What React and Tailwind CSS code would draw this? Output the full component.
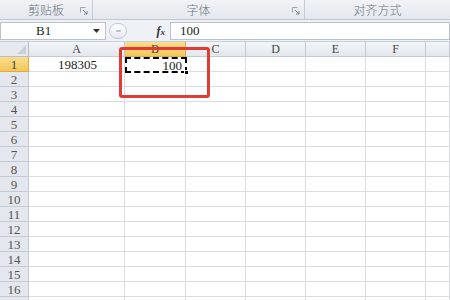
import { useState } from 'react'

const cols = ['A', 'B', 'C', 'D', 'E', 'F', '']
const rows = Array.from({ length: 17 }, (_, i) => i + 1)

const Launcher = () => (
  <svg width="8" height="8" viewBox="0 0 8 8" className="shrink-0">
    <path d="M0.5 0.5h5M0.5 0.5v5" stroke="#9aa4b2" strokeWidth="1" fill="none" />
    <path d="M3 3l4 4M7 4v3h-3" stroke="#7a8696" strokeWidth="1" fill="none" />
  </svg>
)

const RibbonGroup = ({ label, width, launcher }) => {
  return (
    <div className={`relative flex items-center justify-center h-full border-r border-[#c5ccd6] ${width}`}>
      <span className="text-[12px] font-light text-[#6b7280]">{label}</span>
      {launcher && (
        <div className="absolute right-[4px] top-[7px]">
          <Launcher />
        </div>
      )}
    </div>
  )
}

const FormulaBar = () => {
  return (
    <div className="flex h-[18px] items-stretch bg-[#eef1f5]">
      <div className="flex w-[106px] items-center bg-white border border-[#b9c1cc]">
        <span className="flex-1 pl-[35px] text-[13px] text-[#222] font-['Liberation_Serif',serif]">B1</span>
        <svg width="7" height="4" viewBox="0 0 7 4" className="mr-[5px]">
          <path d="M0 0h7L3.5 4z" fill="#333" />
        </svg>
      </div>
      <div className="flex w-[64px] items-center">
        <div className="ml-[3px] h-[16px] w-[18px] rounded-full border border-[#c3c9d2] bg-gradient-to-b from-white to-[#e4e8ee] flex items-center justify-center">
          <div className="h-[2px] w-[5px] bg-[#b8bec8] rounded" />
        </div>
        <span className="ml-auto mr-[5px] text-[12px] italic font-bold text-[#333] font-['Liberation_Serif',serif]">
          f<span className="text-[9px]">x</span>
        </span>
      </div>
      <div className="flex-1 flex items-center bg-white border border-[#b9c1cc]">
        <span className="pl-[9px] text-[13px] text-[#222] font-['Liberation_Serif',serif]">100</span>
      </div>
    </div>
  )
}

const Sheet = () => {
  const [active] = useState({ r: 1, c: 'B' })
  return (
    <div className="relative grid grid-cols-[29px_96px_61px_60px_60px_60px_60px_1fr] auto-rows-[15px] font-['Liberation_Serif',serif] text-[13px] text-[#222]">
      {/* corner */}
      <div className="relative bg-[#e6e9ee] border-r border-b border-[#b5bcc7]">
        <svg width="9" height="9" viewBox="0 0 9 9" className="absolute right-[2px] bottom-[2px]">
          <path d="M9 0v9H0z" fill="#c9cfd8" />
        </svg>
      </div>
      {cols.map((c) => (
        <div
          key={c || 'x'}
          className={`flex items-center justify-center border-r border-b leading-none text-[12px] ${
            c === active.c
              ? 'bg-gradient-to-b from-[#f9dd8c] to-[#f2c75a] border-[#e0a93a] text-[#444]'
              : 'bg-gradient-to-b from-[#f3f5f8] to-[#e3e7ec] border-[#c4cad3] text-[#444]'
          }`}
        >
          {c}
        </div>
      ))}
      {rows.map((r) => (
        <Row key={r} r={r} active={active} />
      ))}

      {/* selected cell, marching ants */}
      <div className="absolute left-[125px] top-[15px] h-[16px] w-[62px] border-2 border-dashed border-black bg-white">
        <div className="flex h-full items-center justify-end pr-[3px] leading-none">100</div>
        <div className="absolute -right-[4px] -bottom-[4px] h-[5px] w-[5px] bg-black border border-white" />
      </div>

      {/* red highlight rectangle */}
      <div className="absolute left-[119px] top-[5px] h-[51px] w-[91px] rounded-[3px] border-[3px] border-[#e23a34]" />
    </div>
  )
}

const Row = ({ r, active }) => {
  const isActive = r === active.r
  return (
    <>
      <div
        className={`flex items-center justify-center border-r border-b text-[13px] leading-none ${
          isActive
            ? 'bg-gradient-to-b from-[#f9dd8c] to-[#f2c75a] border-[#e0a93a] text-[#444]'
            : 'bg-[#e4e8ee] border-[#c4cad3] text-[#555]'
        }`}
      >
        {r < 17 ? r : ''}
      </div>
      {cols.map((c) => (
        <div key={c || 'x'} className="flex items-center border-r border-b border-[#dadcdf] bg-white leading-none">
          {r === 1 && c === 'A' && <span className="w-full text-center pl-[2px]">198305</span>}
        </div>
      ))}
    </>
  )
}

export default function App() {
  return (
    <div className="h-[300px] w-[450px] overflow-hidden bg-white font-['Noto_Sans_CJK_SC',sans-serif]">
      <div className="flex h-[20px] bg-gradient-to-b from-[#f1f3f6] to-[#e4e8ed] border-b border-[#bfc6d0]">
        <RibbonGroup label="剪贴板" width="w-[93px]" launcher />
        <RibbonGroup label="字体" width="w-[212px]" launcher />
        <div className="flex flex-1 items-center justify-center">
          <span className="text-[12px] font-light text-[#6b7280]">对齐方式</span>
        </div>
      </div>
      <div className="h-[2px] bg-[#eef1f5]" />
      <FormulaBar />
      <div className="h-[2px] bg-[#eef1f5] border-b border-[#c9cfd8]" />
      <Sheet />
    </div>
  )
}
